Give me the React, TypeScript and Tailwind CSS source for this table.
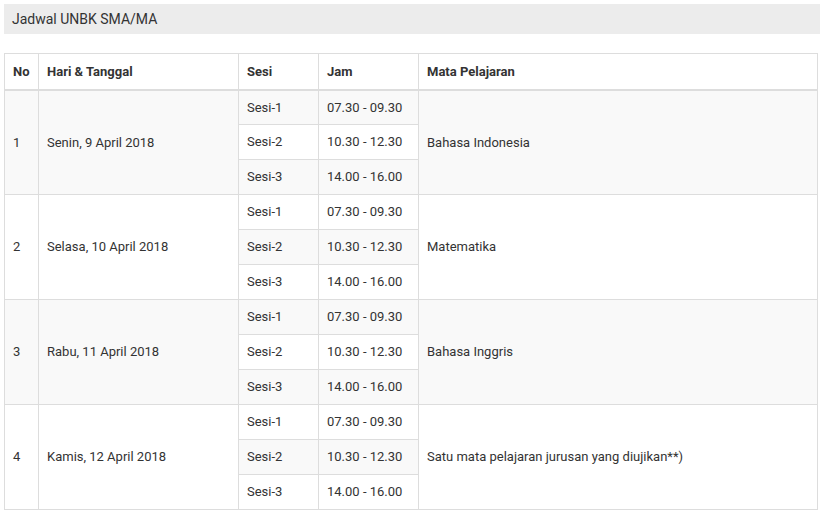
const rows = [
  { no: 1, tanggal: 'Senin, 9 April 2018', mapel: 'Bahasa Indonesia' },
  { no: 2, tanggal: 'Selasa, 10 April 2018', mapel: 'Matematika' },
  { no: 3, tanggal: 'Rabu, 11 April 2018', mapel: 'Bahasa Inggris' },
  { no: 4, tanggal: 'Kamis, 12 April 2018', mapel: 'Satu mata pelajaran jurusan yang diujikan**)' },
];

const sesi = [
  { nama: 'Sesi-1', jam: '07.30 - 09.30' },
  { nama: 'Sesi-2', jam: '10.30 - 12.30' },
  { nama: 'Sesi-3', jam: '14.00 - 16.00' },
];

const cell = 'border border-[#ddd] px-2 h-[35px] align-middle';
const head = 'border border-b-2 border-[#ddd] px-2 h-[36px] align-middle text-left font-bold';

export default function App() {
  let idx = 0;
  return (
    <div className="min-h-screen bg-white px-1 pt-1 text-[13px] text-[#333]" style={{ fontFamily: 'Roboto, "Liberation Sans", sans-serif' }}>
      <div className="flex h-[30px] w-[816px] items-center bg-[#ececec] px-2 text-[14px]">Jadwal UNBK SMA/MA</div>
      <table className="mt-[19px] w-[814px] table-fixed border-collapse">
        <colgroup>
          <col className="w-[34px]" />
          <col className="w-[200px]" />
          <col className="w-[80px]" />
          <col className="w-[100px]" />
          <col />
        </colgroup>
        <thead>
          <tr>
            <th className={head}>No</th>
            <th className={head}>Hari &amp; Tanggal</th>
            <th className={head}>Sesi</th>
            <th className={head}>Jam</th>
            <th className={head}>Mata Pelajaran</th>
          </tr>
        </thead>
        <tbody>
          {rows.map((r) =>
            sesi.map((s, i) => {
              idx += 1;
              const bg = idx % 2 === 1 ? 'bg-[#f9f9f9]' : 'bg-white';
              return (
                <tr key={`${r.no}-${i}`} className={bg}>
                  {i === 0 && <td rowSpan={3} className={cell}>{r.no}</td>}
                  {i === 0 && <td rowSpan={3} className={cell}>{r.tanggal}</td>}
                  <td className={cell}>{s.nama}</td>
                  <td className={cell}>{s.jam}</td>
                  {i === 0 && <td rowSpan={3} className={cell}>{r.mapel}</td>}
                </tr>
              );
            })
          )}
        </tbody>
      </table>
    </div>
  );
}
